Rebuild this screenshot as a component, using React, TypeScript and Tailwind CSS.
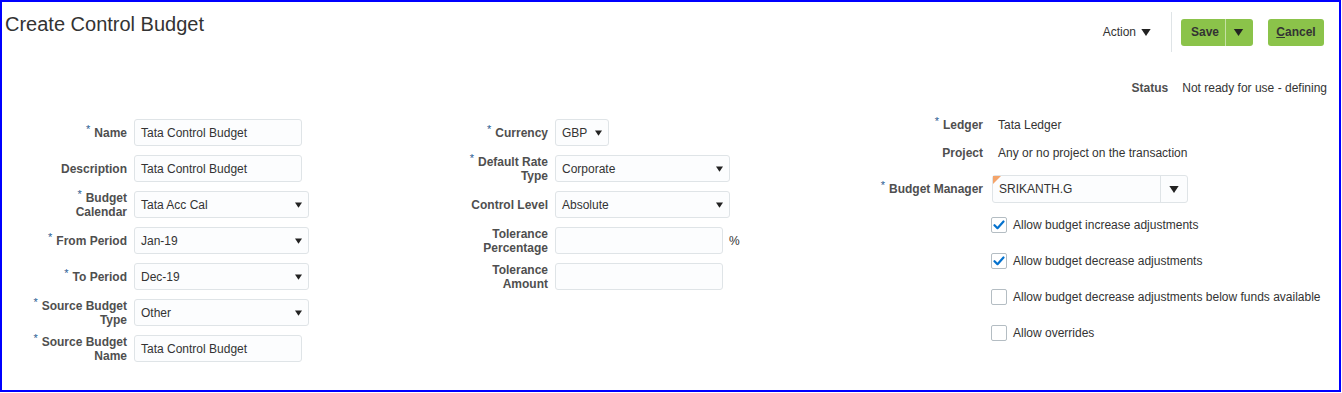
import React from "react";

const Star = () => (
  <span className="relative top-[-4px] mr-[4px] text-[11px] font-normal text-[#2a5d92]">*</span>
);

const Tri = ({ w = 8, h = 6 }: { w?: number; h?: number }) => (
  <svg width={w} height={h} viewBox="0 0 8 6" className="shrink-0">
    <path d="M0 0 L8 0 L4 6 Z" fill="#222" />
  </svg>
);

const Label = ({ children, w }: { children: React.ReactNode; w: string }) => (
  <div className={`${w} shrink-0 text-right text-[12px] font-bold leading-[14px] text-[#4f4f4f]`}>{children}</div>
);

const Input = ({ value, w }: { value?: string; w: string }) => (
  <div className={`${w} h-[27px] shrink-0 rounded-[3px] border border-[#dfe4e7] bg-[#fcfdfe] pl-[6px] flex items-center text-[12px] text-[#333]`}>
    {value}
  </div>
);

const Select = ({ value, w }: { value: string; w: string }) => (
  <div className={`${w} h-[27px] shrink-0 rounded-[3px] border border-[#dfe4e7] bg-[#fcfdfe] pl-[6px] pr-[6px] flex items-center justify-between text-[12px] text-[#333]`}>
    <span>{value}</span>
    <Tri w={7} h={6} />
  </div>
);

const Row = ({ children }: { children: React.ReactNode }) => (
  <div className="flex items-center h-[27px]">{children}</div>
);

const Check = ({ checked, label }: { checked: boolean; label: string }) => (
  <div className="flex items-center h-[28px] mt-[8px]">
    <div className="w-[16px] h-[16px] rounded-[2px] border border-[#b4bdc3] bg-white flex items-center justify-center">
      {checked && (
        <svg width="12" height="10" viewBox="0 0 12 10">
          <path d="M1.5 5.2 L4.5 8.2 L10.5 1.5" stroke="#0572ce" strokeWidth="2.2" fill="none" strokeLinecap="round" strokeLinejoin="round" />
        </svg>
      )}
    </div>
    <span className="ml-[6px] text-[12px] text-[#333]">{label}</span>
  </div>
);

export default function App() {
  return (
    <div
      className="w-[1341px] h-[392px] border-2 border-[#0000ff] bg-white overflow-hidden text-[#333]"
      style={{ fontFamily: '"Liberation Sans", Arial, sans-serif' }}
    >
      {/* Header */}
      <div className="flex items-start justify-between">
        <div className="mt-[10px] pl-[3px] text-[20px] leading-[24px] text-[#333]">Create Control Budget</div>
        <div className="mt-[10px] flex items-center h-[40px] pr-[15px]">
          <span className="text-[12px] text-[#333]">Action</span>
          <span className="ml-[5px]"><Tri w={10} h={7} /></span>
          <div className="ml-[20px] w-px h-[40px] bg-[#dfe4e7]" />
          <div className="ml-[9px] h-[27px] w-[72px] rounded-[3px] bg-[#8bc34a] flex items-center">
            <span className="pl-[10px] w-[44px] text-[12px] font-bold text-[#333]">Save</span>
            <div className="w-px h-[27px] bg-[#c5e0a5]" />
            <span className="ml-[7px]"><Tri w={11} h={7} /></span>
          </div>
          <div className="ml-[15px] h-[27px] w-[56px] rounded-[3px] bg-[#8bc34a] flex items-center justify-center text-[12px] font-bold text-[#333]">
            <span><span className="underline">C</span>ancel</span>
          </div>
        </div>
      </div>

      {/* Status */}
      <div className="mt-[27px] h-[18px] flex items-center justify-end pr-[12px] text-[12px]">
        <span className="font-bold text-[#4f4f4f]">Status</span>
        <span className="ml-[14px] text-[#333]">Not ready for use - defining</span>
      </div>

      {/* Form */}
      <div className="mt-[18px] flex items-start">
        {/* Column 1 */}
        <div className="w-[418px] pt-[4px] flex flex-col gap-[9px]">
          <Row><Label w="w-[125px]"><Star />Name</Label><div className="ml-[7px]"><Input w="w-[168px]" value="Tata Control Budget" /></div></Row>
          <Row><Label w="w-[125px]">Description</Label><div className="ml-[7px]"><Input w="w-[168px]" value="Tata Control Budget" /></div></Row>
          <Row><Label w="w-[125px]"><Star />Budget<br />Calendar</Label><div className="ml-[7px]"><Select w="w-[175px]" value="Tata Acc Cal" /></div></Row>
          <Row><Label w="w-[125px]"><Star />From Period</Label><div className="ml-[7px]"><Select w="w-[175px]" value="Jan-19" /></div></Row>
          <Row><Label w="w-[125px]"><Star />To Period</Label><div className="ml-[7px]"><Select w="w-[175px]" value="Dec-19" /></div></Row>
          <Row><Label w="w-[125px]"><Star />Source Budget<br />Type</Label><div className="ml-[7px]"><Select w="w-[175px]" value="Other" /></div></Row>
          <Row><Label w="w-[125px]"><Star />Source Budget<br />Name</Label><div className="ml-[7px]"><Input w="w-[168px]" value="Tata Control Budget" /></div></Row>
        </div>

        {/* Column 2 */}
        <div className="w-[440px] pt-[4px] flex flex-col gap-[9px]">
          <Row><Label w="w-[128px]"><Star />Currency</Label><div className="ml-[7px]"><Select w="w-[54px]" value="GBP" /></div></Row>
          <Row><Label w="w-[128px]"><Star />Default Rate<br />Type</Label><div className="ml-[7px]"><Select w="w-[175px]" value="Corporate" /></div></Row>
          <Row><Label w="w-[128px]">Control Level</Label><div className="ml-[7px]"><Select w="w-[175px]" value="Absolute" /></div></Row>
          <Row><Label w="w-[128px]">Tolerance<br />Percentage</Label><div className="ml-[7px]"><Input w="w-[168px]" /></div><span className="ml-[6px] text-[12px] text-[#333]">%</span></Row>
          <Row><Label w="w-[128px]">Tolerance<br />Amount</Label><div className="ml-[7px]"><Input w="w-[168px]" /></div></Row>
        </div>

        {/* Column 3 */}
        <div className="flex flex-col">
          <div className="flex items-center h-[18px] mt-[1px]">
            <Label w="w-[123px]"><Star />Ledger</Label>
            <span className="ml-[15px] text-[12px] text-[#333]">Tata Ledger</span>
          </div>
          <div className="flex items-center h-[18px] mt-[10px]">
            <Label w="w-[123px]">Project</Label>
            <span className="ml-[15px] text-[12px] text-[#333]">Any or no project on the transaction</span>
          </div>
          <div className="flex items-center h-[28px] mt-[13px]">
            <Label w="w-[123px]"><Star />Budget Manager</Label>
            <div className="ml-[9px] relative w-[196px] h-[28px] rounded-[3px] border border-[#dfe4e7] bg-[#fcfdfe] flex items-center">
              <svg width="8" height="8" viewBox="0 0 8 8" className="absolute left-0 top-0">
                <path d="M0 0 L8 0 L0 8 Z" fill="#f4a46a" />
              </svg>
              <span className="pl-[6px] flex-1 text-[12px] text-[#333]">SRIKANTH.G</span>
              <div className="w-[27px] h-full border-l border-[#dfe4e7] flex items-center justify-center">
                <Tri w={10} h={7} />
              </div>
            </div>
          </div>
          <div className="ml-[131px] flex flex-col">
            <Check checked label="Allow budget increase adjustments" />
            <Check checked label="Allow budget decrease adjustments" />
            <Check checked={false} label="Allow budget decrease adjustments below funds available" />
            <Check checked={false} label="Allow overrides" />
          </div>
        </div>
      </div>
    </div>
  );
}
